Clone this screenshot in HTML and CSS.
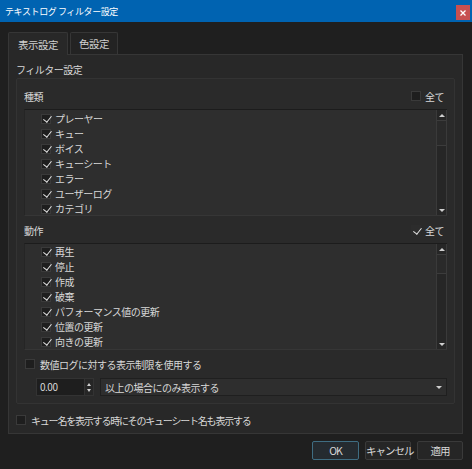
FILE: index.html
```html
<!DOCTYPE html>
<html lang="ja">
<head>
<meta charset="utf-8">
<link rel="stylesheet" href="styles.css">
</head>
<body>
<div class="window">
  <div class="titlebar">
    <span class="title">テキストログ フィルター設定</span>
    <span class="close"><svg width="6" height="6" viewBox="0 0 6 6"><path d="M0.5 0.5L5.5 5.5M5.5 0.5L0.5 5.5" stroke="#fff" stroke-width="1.3"/></svg></span>
  </div>
  <div class="main">
    <div class="tabs">
      <div class="tab active">表示設定</div>
      <div class="tab">色設定</div>
    </div>
    <div class="panel">
      <div class="panel-label">フィルター設定</div>
      <div class="group">
        <div class="header-row">
          <span>種類</span>
          <label class="all"><span class="cb"></span><span>全て</span></label>
        </div>
        <div class="list">
          <div class="items">
            <div class="item"><span class="cb on"></span><span>プレーヤー</span></div>
            <div class="item"><span class="cb on"></span><span>キュー</span></div>
            <div class="item"><span class="cb on"></span><span>ボイス</span></div>
            <div class="item"><span class="cb on"></span><span>キューシート</span></div>
            <div class="item"><span class="cb on"></span><span>エラー</span></div>
            <div class="item"><span class="cb on"></span><span>ユーザーログ</span></div>
            <div class="item"><span class="cb on"></span><span>カテゴリ</span></div>
          </div>
          <div class="scrollbar">
            <span class="arrow up"></span>
            <span class="thumb"></span>
            <span class="track"></span>
            <span class="arrow down"></span>
          </div>
        </div>
        <div class="header-row second">
          <span>動作</span>
          <label class="all"><span class="cb on plain"></span><span>全て</span></label>
        </div>
        <div class="list">
          <div class="items tight">
            <div class="item"><span class="cb on"></span><span>再生</span></div>
            <div class="item"><span class="cb on"></span><span>停止</span></div>
            <div class="item"><span class="cb on"></span><span>作成</span></div>
            <div class="item"><span class="cb on"></span><span>破棄</span></div>
            <div class="item"><span class="cb on"></span><span>パフォーマンス値の更新</span></div>
            <div class="item"><span class="cb on"></span><span>位置の更新</span></div>
            <div class="item"><span class="cb on"></span><span>向きの更新</span></div>
          </div>
          <div class="scrollbar">
            <span class="arrow up"></span>
            <span class="thumb short"></span>
            <span class="track"></span>
            <span class="arrow down"></span>
          </div>
        </div>
        <div class="check-row"><span class="cb"></span><span>数値ログに対する表示制限を使用する</span></div>
        <div class="limit-row">
          <div class="spin">
            <span class="spin-value">0.00</span>
            <span class="spin-btns"><span class="arrow up small"></span><span class="arrow down small"></span></span>
          </div>
          <div class="combo">
            <span>以上の場合にのみ表示する</span>
            <span class="arrow down"></span>
          </div>
        </div>
      </div>
      <div class="check-row outer"><span class="cb"></span><span class="long">キュー名を表示する時にそのキューシート名も表示する</span></div>
    </div>
    <div class="footer">
      <button class="btn primary">OK</button>
      <button class="btn">キャンセル</button>
      <button class="btn">適用</button>
    </div>
  </div>
</div>
</body>
</html>
```
FILE: styles.css
```css
* { box-sizing: border-box; }
html, body {
  margin: 0;
  padding: 0;
  background: #1f1f1f;
}
body {
  font-family: "Noto Sans CJK JP", "Noto Sans", sans-serif;
  font-size: 10px;
  color: #d8d8d8;
  letter-spacing: -0.5px;
}
.window {
  width: 472px;
  height: 469px;
  display: flex;
  flex-direction: column;
  background: #1f1f1f;
}
.titlebar {
  height: 22px;
  background: #0063b1;
  display: flex;
  align-items: center;
  justify-content: space-between;
  padding: 0 2px 0 5px;
  color: #fff;
}
.title {
  font-size: 9px;
  letter-spacing: -0.4px;
}
.close {
  width: 14px;
  height: 15px;
  background: #c75050;
  display: flex;
  align-items: center;
  justify-content: center;
  margin-top: 3px;
}
.main {
  padding: 9px 9px 0 8px;
  display: flex;
  flex-direction: column;
}
.tabs {
  display: flex;
  align-items: flex-end;
  gap: 2px;
  height: 23px;
}
.tab {
  height: 22px;
  width: 48px;
  display: flex;
  align-items: center;
  justify-content: center;
  background: #232323;
  border: 1px solid #363636;
  border-bottom: none;
  border-radius: 2px 2px 0 0;
  font-size: 10.5px;
  color: #d0d0d0;
}
.tab.active {
  height: 23px;
  width: 60px;
  background: #282828;
  position: relative;
  top: 1px;
  z-index: 1;
}
.panel {
  height: 380px;
  border: 1px solid #363636;
  background: #282828;
  padding: 7px 7px 0 7px;
  display: flex;
  flex-direction: column;
}
.panel-label {
  height: 16px;
  line-height: 16px;
}
.group {
  height: 326px;
  border: 1px solid #333;
  border-radius: 2px;
  background: #2a2a2a;
  padding: 9px 7px 0 7px;
  display: flex;
  flex-direction: column;
}
.header-row {
  height: 16px;
  flex: none;
  display: flex;
  align-items: center;
  justify-content: space-between;
  padding-right: 3px;
}
.header-row.second {
  margin-top: 6px;
}
.all {
  display: flex;
  align-items: center;
  gap: 4px;
}
.list {
  margin-top: 5px;
  height: 107px;
  flex: none;
  display: flex;
  background: #2e2e2e;
  border-top: 1px solid #1c1c1c;
  border-left: 1px solid #252525;
  border-bottom: 1px solid #363636;
  overflow: hidden;
}
.items {
  flex: 1;
  padding: 1px 0 0 16px;
}
.items.tight {
  padding-top: 0;
}
.item {
  height: 15px;
  display: flex;
  align-items: center;
  gap: 4px;
}
.cb {
  width: 10px;
  height: 10px;
  background: #1e1e1e;
  border: 1px solid #3a3a3a;
  position: relative;
  flex: none;
}
.cb.on::after {
  content: "";
  position: absolute;
  left: 2.5px;
  top: -0.5px;
  width: 3.5px;
  height: 7px;
  border-right: 1.4px solid #e6e6e6;
  border-bottom: 1.4px solid #e6e6e6;
  transform: rotate(38deg);
}
.cb.plain {
  background: #2c2c2c;
  border-color: #2c2c2c;
}
.scrollbar {
  width: 11px;
  display: flex;
  flex-direction: column;
  background: #262626;
  border-left: 1px solid #3a3a3a;
  border-right: 1px solid #3a3a3a;
}
.scrollbar .arrow {
  height: 10px;
  flex: none;
}
.thumb {
  height: 26px;
  border-top: 1px solid #3c3c3c;
  border-bottom: 1px solid #3c3c3c;
  background: #2a2a2a;
  flex: none;
}
.thumb.short {
  height: 20px;
}
.track { flex: 1; }
.arrow {
  display: flex;
  align-items: center;
  justify-content: center;
}
.arrow::before {
  content: "";
  width: 0;
  height: 0;
  border-left: 3px solid transparent;
  border-right: 3px solid transparent;
}
.arrow.up::before { border-bottom: 3px solid #cfcfcf; }
.arrow.down::before { border-top: 3px solid #cfcfcf; }
.arrow.small::before {
  border-left-width: 2.5px;
  border-right-width: 2.5px;
}
.check-row {
  display: flex;
  align-items: center;
  gap: 5px;
  height: 14px;
  flex: none;
  margin-top: 7px;
  padding-left: 1px;
}
.limit-row {
  display: flex;
  gap: 6px;
  margin-top: 7px;
  padding-left: 12px;
  height: 18px;
  flex: none;
}
.spin {
  width: 58px;
  display: flex;
  background: #1e1e1e;
  border: 1px solid #333;
}
.spin-value {
  flex: 1;
  padding-left: 3px;
  line-height: 16px;
}
.spin-btns {
  width: 9px;
  display: flex;
  flex-direction: column;
  justify-content: center;
  border-left: 1px solid #333;
  background: #262626;
}
.spin-btns .arrow { height: 6px; }
.combo {
  flex: 1;
  display: flex;
  align-items: center;
  justify-content: space-between;
  padding: 0 4px 0 4px;
  background: #2e2e2e;
  border: 1px solid #1f1f1f;
}
.check-row.outer {
  margin-top: 9px;
  padding-left: 0;
  gap: 5px;
}
.long {
  letter-spacing: -1.2px;
}
.footer {
  display: flex;
  justify-content: flex-end;
  gap: 6px;
  padding-top: 7px;
}
.btn {
  width: 46px;
  height: 19px;
  background: #262626;
  border: 1px solid #3a3a3a;
  border-radius: 2px;
  color: #d8d8d8;
  font-family: inherit;
  font-size: 10.5px;
  letter-spacing: -1px;
  white-space: nowrap;
  padding: 0;
}
.btn.primary {
  width: 47px;
  border-color: #3f6d82;
  background: #252b30;
}
```
